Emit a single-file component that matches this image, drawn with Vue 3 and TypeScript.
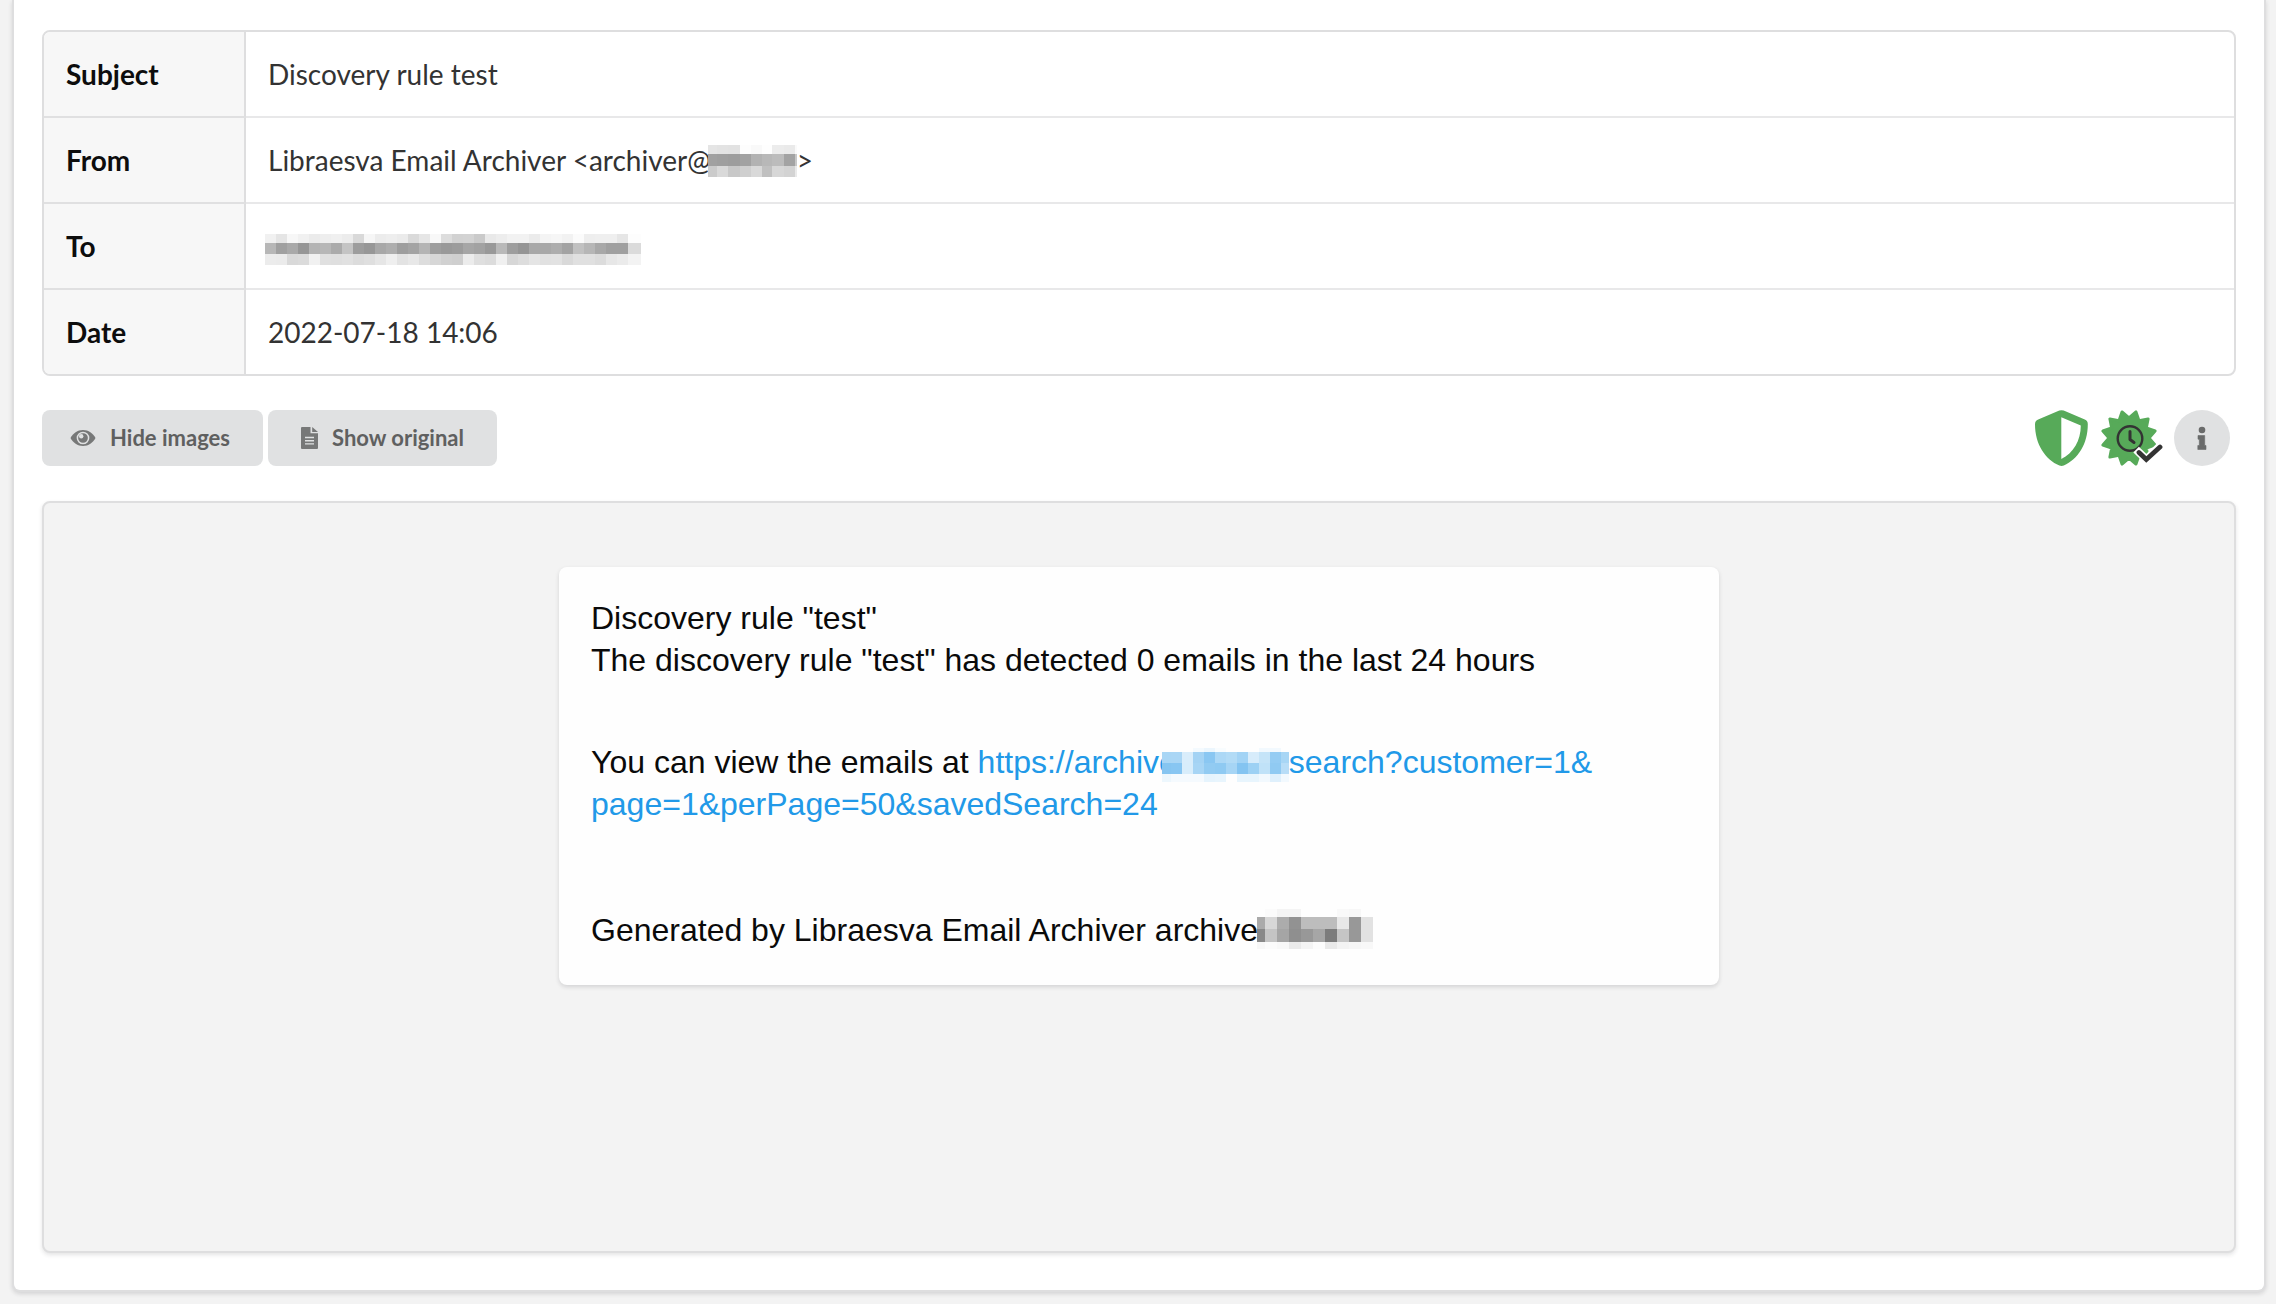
<script setup lang="ts">
import { defineComponent, h } from 'vue'

interface Mosaic {
  widths: number[]
  heights: number[]
  rows: string[][]
}

const repeat = (n: number, w: number): number[] => Array.from({ length: n }, () => w)

// Each row lists one two-digit hex grey level per block.
const greys = (line: string): string[] => line.split(' ').map((v) => `#${v}${v}${v}`)
const colors = (line: string): string[] => line.split(' ').map((v) => `#${v}`)

const senderDomain: Mosaic = {
  widths: [9, 11, 12, 11, 11, 10, 12, 11, 2],
  heights: [9, 12, 11],
  rows: [
    greys('e5 e3 e2 fd f9 fe ec ea fa'),
    greys('a1 9f 9d a2 b2 b8 bc a3 c8'),
    greys('cb d9 c8 cf d9 c0 d7 d3 ea'),
  ],
}

const recipient: Mosaic = {
  widths: [...repeat(34, 11), 2],
  heights: [9, 11, 11],
  rows: [
    greys('f1 e5 f7 f1 eb ee f0 ec d9 f6 ec ee eb da e6 f8 dd d2 d3 ca e9 ed f2 f2 eb f4 f6 f2 fb ee ef ef e6 fd fd'),
    greys('b7 a0 a9 96 b4 b7 ab c4 9d 97 a8 ae 9e a4 b4 9e 99 9c a6 a2 99 b9 9e 95 a8 a8 ad a3 c1 b6 a8 a0 a0 db db'),
    greys('ec eb d9 db f1 e0 df e1 dc df e6 ef e3 e8 dd d7 d1 cf ec df dc f0 d7 dd e5 e1 e2 d9 e0 e0 dc e7 eb f3 f3'),
  ],
}

const linkHost: Mosaic = {
  widths: [9, 11, 11, 11, 11, 11, 11, 11, 11, 11, 11, 8],
  heights: [4, 11, 11, 8],
  rows: [
    colors('fefefe fefefe fefefe f4fafe ecf6fd f8fcfe fefefe fefefe fefefe f2f9fe f2f9fe fefefe'),
    colors('a9d6f5 aad6f5 d9edfb a4d3f4 8ac7f2 acd8f6 b2dbf6 a2d3f5 d7ecfb c5e4f8 94ccf3 a8d6f5'),
    colors('86c5f1 88c6f2 d8edfb a7d5f5 92cbf2 8fcaf2 a6d5f5 84c4f1 9dd1f4 c0e2f8 90caf2 b8ddf7'),
    colors('edf7fd f5fafe f5fafe f5fafe e6f4fd e8f5fd fefefe e8f5fd e8f5fd f2f9fe dff0fc f2f9fe'),
  ],
}

const footerHost: Mosaic = {
  widths: [8, 12, 12, 12, 12, 12, 12, 12, 12, 12],
  heights: [8, 12, 13, 7],
  rows: [
    greys('fe fb f4 f4 fe fe fe f9 f7 fe'),
    greys('aa d7 ac 92 bd bd bd e8 98 e2'),
    greys('88 c4 a5 8f 98 a6 7c c5 98 e2'),
    greys('f7 fb f8 ea f4 fc e9 f3 f6 f8'),
  ],
}

const sum = (list: number[], end: number = list.length): number =>
  list.slice(0, end).reduce((a, b) => a + b, 0)

const RedactedText = defineComponent({
  props: { mosaic: { type: Object as () => Mosaic, required: true } },
  setup(props) {
    return () => {
      const { widths, heights, rows } = props.mosaic
      const blocks = rows.flatMap((row, r) =>
        row.map((fill, c) =>
          h('rect', {
            x: sum(widths, c),
            y: sum(heights, r),
            width: widths[c],
            height: heights[r],
            fill,
          }),
        ),
      )
      return h(
        'svg',
        {
          width: sum(widths),
          height: sum(heights),
          'shape-rendering': 'crispEdges',
          'aria-label': 'hidden',
        },
        blocks,
      )
    }
  },
})

// Twelve-pointed seal, centred on 28,28; tips sit on the odd steps.
const sealPoints: string = Array.from({ length: 24 }, (_, i) => {
  const angle = ((i * 15 - 90) * Math.PI) / 180
  const radius = i % 2 ? 27 : 20
  return `${(28 + radius * Math.cos(angle)).toFixed(2)},${(28 + radius * Math.sin(angle)).toFixed(2)}`
}).join(' ')
</script>

<template>
  <main class="page">
    <section class="card">
      <table class="headers">
        <tbody>
          <tr>
            <th scope="row">Subject</th>
            <td>Discovery rule test</td>
          </tr>
          <tr>
            <th scope="row">From</th>
            <td>
              Libraesva Email Archiver &lt;archiver@<RedactedText class="redacted sender" :mosaic="senderDomain" />&gt;
            </td>
          </tr>
          <tr>
            <th scope="row">To</th>
            <td><RedactedText class="redacted recipient" :mosaic="recipient" /></td>
          </tr>
          <tr>
            <th scope="row">Date</th>
            <td>2022-07-18 14:06</td>
          </tr>
        </tbody>
      </table>

      <div class="toolbar">
        <div class="actions">
          <button type="button" class="button">
            <svg class="icon" width="26" height="24" viewBox="0 0 26 24" aria-hidden="true">
              <path d="M0.500 12C3 7.500 7.500 4 13 4s10 3.500 12.500 8C23 16.500 18.500 20 13 20S3 16.500 0.500 12z" fill="currentColor" />
              <circle cx="13" cy="12" r="5.600" fill="currentColor" stroke="#e0e1e2" stroke-width="1.500" />
              <circle cx="11.200" cy="10.200" r="2.200" fill="#e0e1e2" />
            </svg>
            Hide images
          </button>
          <button type="button" class="button">
            <svg class="icon" width="22" height="24" viewBox="0 0 22 24" aria-hidden="true">
              <path d="M6 1H14.500V7.200H22V22a1 1 0 0 1-1 1H6a1 1 0 0 1-1-1V2a1 1 0 0 1 1-1z" fill="currentColor" />
              <path d="M16.200 1L22 6H16.200z" fill="currentColor" />
              <path d="M9 11.500h9M9 14.700h9M9 17.900h9" stroke="#e0e1e2" stroke-width="1.400" />
            </svg>
            Show original
          </button>
        </div>
        <div class="status">
          <svg width="54" height="56" viewBox="0 0 54 56" role="img" aria-label="Verified">
            <path
              fill="#57aa59"
              fill-rule="evenodd"
              d="M24.300 .6a6 6 0 0 1 4.400 0L49.800 9.600a5 5 0 0 1 3 4.600c0 20-10 35-24 41.300a6 6 0 0 1-4.400 0C10.500 49.600 0 34.500 0 14.200a5 5 0 0 1 3.200-4.600zM26.300 7.300V49.100C38.300 42.800 45.800 30.500 45.800 15.400z"
            />
          </svg>
          <svg width="62" height="56" viewBox="0 0 62 56" role="img" aria-label="Timestamp verified">
            <polygon :points="sealPoints" fill="#57aa59" stroke="#57aa59" stroke-width="3" stroke-linejoin="round" />
            <circle cx="29" cy="28.500" r="12.300" fill="none" stroke="#333" stroke-width="2.400" />
            <path d="M29 21.500v8l4 3" fill="none" stroke="#333" stroke-width="3" stroke-linecap="round" stroke-linejoin="round" />
            <path d="M38 42.500l7.300 7L59 36" fill="none" stroke="#fff" stroke-width="8" stroke-linecap="square" />
            <path d="M38 42.500l7.300 7L59 37" fill="none" stroke="#333" stroke-width="4.800" stroke-linecap="round" />
          </svg>
          <button type="button" class="info" aria-label="Information">
            <svg width="10" height="24" viewBox="0 0 10 24" aria-hidden="true">
              <circle cx="5" cy="4" r="3.300" fill="currentColor" />
              <path d="M1 9.500H7.700V19.500H9V23.500H.8V19.500H2.300V13.200H1z" fill="currentColor" stroke="currentColor" stroke-width=".6" stroke-linejoin="round" />
            </svg>
          </button>
        </div>
      </div>

      <div class="preview">
        <article class="message">
          <p>Discovery rule "test"<br />The discovery rule "test" has detected 0 emails in the last 24 hours</p>
          <p class="view">
            You can view the emails at
            <a href="#">https://archive<RedactedText class="redacted link-host" :mosaic="linkHost" />search?customer=1&amp;<wbr />page=1&amp;perPage=50&amp;savedSearch=24</a>
          </p>
          <p class="generated">
            Generated by Libraesva Email Archiver archive<RedactedText class="redacted footer-host" :mosaic="footerHost" />
          </p>
        </article>
      </div>
    </section>
  </main>
</template>

<style>
body {
  margin: 0;
  background: #f3f3f3;
}
</style>

<style scoped>
* {
  box-sizing: border-box;
}

.page {
  padding: 0 10px 12px 12px;
  font-family: Lato, 'Liberation Sans', sans-serif;
  color: #333;
}

.card {
  padding: 30px 28px 37px;
  background: #fff;
  border: 2px solid #dededf;
  border-top: 0;
  border-radius: 0 0 8px 8px;
  box-shadow: 0 2px 4px rgba(34, 36, 38, 0.15);
}

.headers {
  width: 100%;
  border: 2px solid #dededf;
  border-radius: 8px;
  border-collapse: separate;
  border-spacing: 0;
  overflow: hidden;
  font-size: 28px;
  line-height: 36px;
}

.headers th,
.headers td {
  height: 86px;
  padding: 0 22px;
  border-bottom: 2px solid #e8e8e9;
  text-align: left;
  vertical-align: middle;
}

.headers th {
  width: 202px;
  background: #f7f7f7;
  border-right: 2px solid #dededf;
  border-bottom-color: #e0e0e1;
  color: #0d0d0d;
  font-weight: 700;
}

.headers tr:last-child > * {
  height: 84px;
  border-bottom: 0;
}

.redacted {
  position: relative;
  vertical-align: middle;
}

.sender {
  margin: -13px 0 -7px -3px;
}

.recipient {
  display: block;
  margin: 6px 0 0 -3px;
}

.toolbar {
  display: flex;
  justify-content: space-between;
  align-items: center;
  margin: 34px 0 35px;
  padding-right: 6px;
}

.actions {
  display: flex;
  gap: 5px;
}

.button {
  display: flex;
  align-items: center;
  gap: 14px;
  height: 56px;
  padding: 0 33px 0 28px;
  border: 0;
  border-radius: 8px;
  background: #e0e1e2;
  color: #5f6060;
  font: 700 22px/24px Lato, 'Liberation Sans', sans-serif;
}

.icon {
  color: #777878;
}

.status {
  display: flex;
  align-items: center;
  gap: 12px;
}

.info {
  display: grid;
  place-items: center;
  width: 56px;
  height: 56px;
  margin-left: -1px;
  padding: 0;
  border: 0;
  border-radius: 50%;
  background: #e0e1e2;
  color: #6a6b6b;
}

.preview {
  min-height: 752px;
  padding: 64px 32px;
  background: #f3f3f3;
  border: 2px solid #dededf;
  border-radius: 8px;
  box-shadow: 0 2px 4px rgba(34, 36, 38, 0.12);
}

.message {
  max-width: 1160px;
  margin: 0 auto;
  padding: 30px 32px 34px;
  background: #fefefe;
  border-radius: 8px;
  box-shadow: 0 2px 4px rgba(34, 36, 38, 0.15);
  color: #0a0a0a;
  font: 32px/42px 'Liberation Sans', Arial, sans-serif;
}

.message p {
  margin: 0;
}

.message .view {
  margin-top: 60px;
}

.message .generated {
  margin-top: 84px;
}

.message a {
  color: #2199e8;
  text-decoration: none;
}

.link-host {
  margin: -10px 0 -10px -15px;
}

.footer-host {
  margin: -14px 0 -6px -1px;
}
</style>
